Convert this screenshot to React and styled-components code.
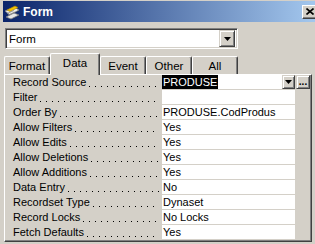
import React from 'react'
import styled, { createGlobalStyle } from 'styled-components'

const GlobalStyle = createGlobalStyle`
  html, body {
    margin: 0;
    padding: 0;
  }
  body {
    width: 315px;
    height: 244px;
    overflow: hidden;
    background: #d4d0c8;
    font-family: 'Liberation Sans', Arial, sans-serif;
    font-size: 11px;
    color: #000;
  }
`

const Window = styled.div`
  width: 320px;
  height: 244px;
  box-sizing: border-box;
  padding: 1px 0 0 3px;
  background: #d4d0c8;
  display: flex;
  flex-direction: column;
`

const TitleBar = styled.div`
  height: 21px;
  display: flex;
  align-items: center;
  gap: 3px;
  padding-left: 1px;
  background: linear-gradient(to right, #0a246a, #a6caf0);
`

const TitleText = styled.span`
  color: #fff;
  font-weight: bold;
  font-size: 12px;
`

const CloseButton = styled.div`
  margin-left: auto;
  margin-right: 2px;
  width: 16px;
  height: 14px;
  box-sizing: border-box;
  background: #d4d0c8;
  border: 1px solid;
  border-color: #fff #404040 #404040 #fff;
  box-shadow: inset -1px -1px #808080;
  display: flex;
  align-items: center;
  justify-content: center;
`

const Combo = styled.div`
  margin: 6px 0 0 2px;
  width: 233px;
  height: 21px;
  box-sizing: border-box;
  background: #fff;
  border: 1px solid;
  border-color: #808080 #fff #fff #808080;
  box-shadow: inset 1px 1px #404040, inset -1px -1px #d4d0c8;
  display: flex;
  align-items: center;
  padding: 2px 2px 2px 3px;
  font-size: 11.5px;
`

const ComboText = styled.span`
  flex: 1;
`

const DropButton = styled.div`
  width: ${p => p.$w || 16}px;
  height: ${p => p.$h || 17}px;
  box-sizing: border-box;
  background: #d4d0c8;
  border: 1px solid;
  border-color: #d4d0c8 #404040 #404040 #d4d0c8;
  box-shadow: inset 1px 1px #fff, inset -1px -1px #808080;
  display: flex;
  align-items: center;
  justify-content: center;
  font-weight: bold;
  font-size: 10px;
  line-height: 1;
  flex-shrink: 0;
`

const TabRow = styled.div`
  margin: 4px 0 0 1px;
  height: 21px;
  display: flex;
  align-items: flex-end;
  position: relative;
  z-index: 1;
`

const Tab = styled.div`
  width: ${p => p.$w}px;
  height: ${p => (p.$active ? 22 : 18)}px;
  margin-bottom: ${p => (p.$active ? -1 : 0)}px;
  box-sizing: border-box;
  background: #d4d0c8;
  border-top: 1px solid #fff;
  border-left: 1px solid #fff;
  border-right: 1px solid #404040;
  border-radius: 2px 2px 0 0;
  box-shadow: inset -1px 0 #808080;
  display: flex;
  justify-content: center;
  padding-top: 3px;
  font-size: 11.5px;
  line-height: 12px;
`

const Panel = styled.div`
  margin-left: 1px;
  width: 308px;
  box-sizing: border-box;
  border-top: 1px solid #fff;
  border-left: 1px solid #fff;
  border-right: 1px solid #404040;
  border-bottom: 1px solid #404040;
  box-shadow: inset -1px -1px #808080;
  padding-bottom: 1px;
`

const Row = styled.div`
  display: grid;
  grid-template-columns: 157px 133px 1fr;
  height: 15px;
`

const Label = styled.div`
  display: flex;
  padding: 0 3px 0 8px;
  height: 15px;
  line-height: 15px;
  white-space: nowrap;
  overflow: hidden;
`

const Leader = styled.span`
  flex: 1;
  margin-left: 3px;
  background-image: linear-gradient(to right, #000 1px, transparent 1px);
  background-size: 6px 1px;
  background-repeat: repeat-x;
  background-position: 0 11px;
`

const Value = styled.div`
  height: 14px;
  background: #fff;
  border-bottom: 1px solid #d4d0c8;
  padding-left: 1px;
  line-height: 14px;
  white-space: nowrap;
  display: flex;
  align-items: center;
`

const Selected = styled.span`
  background: #000;
  color: #fff;
  height: 14px;
  line-height: 14px;
  margin-left: -1px;
  padding: 0 1px;
`

const Extra = styled.div`
  display: flex;
  padding-left: 1px;
`

const Arrow = () => (
  <svg width="7" height="4" viewBox="0 0 7 4">
    <path d="M0 0h7L3.5 4z" fill="#000" />
  </svg>
)

const FormIcon = () => (
  <svg width="16" height="16" viewBox="0 0 16 16">
    <path d="M1 7l9-4 5 3-9 5z" fill="#f0f0f0" stroke="#7a7a7a" strokeWidth="0.8" />
    <path d="M2 13l8-4 5 2-8 4z" fill="#e8e8e8" stroke="#7a7a7a" strokeWidth="0.8" />
    <path d="M3 6l8-4 3 1.5-8 4z" fill="#f5c400" stroke="#a07800" strokeWidth="0.6" />
    <path d="M3 9.5l7-3M4 11l7-3" stroke="#8a8a8a" strokeWidth="0.8" />
  </svg>
)

const props = [
  ['Record Source', 'PRODUSE'],
  ['Filter', ''],
  ['Order By', 'PRODUSE.CodProdus'],
  ['Allow Filters', 'Yes'],
  ['Allow Edits', 'Yes'],
  ['Allow Deletions', 'Yes'],
  ['Allow Additions', 'Yes'],
  ['Data Entry', 'No'],
  ['Recordset Type', 'Dynaset'],
  ['Record Locks', 'No Locks'],
  ['Fetch Defaults', 'Yes'],
]

const tabs = [
  ['Format', 46],
  ['Data', 50],
  ['Event', 46],
  ['Other', 46],
  ['All', 46],
]

export default function App() {
  return (
    <>
      <GlobalStyle />
      <Window>
        <TitleBar>
          <FormIcon />
          <TitleText>Form</TitleText>
          <CloseButton>
            <svg width="8" height="7" viewBox="0 0 8 7">
              <path d="M0.5 0.5l7 6M7.5 0.5l-7 6" stroke="#000" strokeWidth="1.6" />
            </svg>
          </CloseButton>
        </TitleBar>
        <Combo>
          <ComboText>Form</ComboText>
          <DropButton>
            <Arrow />
          </DropButton>
        </Combo>
        <TabRow>
          {tabs.map(([name, w]) => (
            <Tab key={name} $w={w} $active={name === 'Data'}>
              {name}
            </Tab>
          ))}
        </TabRow>
        <Panel>
          {props.map(([name, value], i) => (
            <Row key={name}>
              <Label>
                {name}
                <Leader />
              </Label>
              {i === 0 ? (
                <Value>
                  <Selected>{value}</Selected>
                  <span style={{ flex: 1 }} />
                  <DropButton $w={13} $h={14}>
                    <Arrow />
                  </DropButton>
                </Value>
              ) : (
                <Value>{value}</Value>
              )}
              {i === 0 ? (
                <Extra>
                  <DropButton $w={14} $h={14}>...</DropButton>
                </Extra>
              ) : (
                <div />
              )}
            </Row>
          ))}
        </Panel>
      </Window>
    </>
  )
}
